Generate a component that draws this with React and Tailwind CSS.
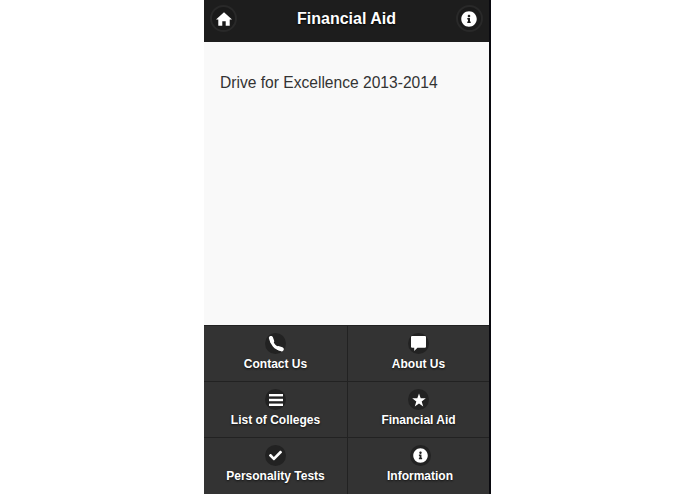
import { FaInfoCircle, FaCheck } from 'react-icons/fa';

function HomeIcon() {
  return (
    <svg viewBox="0 0 14 14" className="w-[16px] h-[16px]" fill="currentColor">
      <path d="M7 1 L14 7.5 L12 7.5 L12 13 L8.5 13 L8.5 9 L5.5 9 L5.5 13 L2 13 L2 7.5 L0 7.5 Z" />
    </svg>
  );
}

function PhoneIcon() {
  return (
    <svg viewBox="0 0 14 14" className="w-[16px] h-[16px]" fill="none" stroke="currentColor" strokeLinecap="round">
      <path d="M3 2.5 C2.8 6.5 6.5 11 11 11.5" strokeWidth="2.6" />
      <path d="M2.6 1.8 L3.6 4.6" strokeWidth="3.6" />
      <path d="M9.2 10.6 L12 11.6" strokeWidth="3.6" />
    </svg>
  );
}

function BubbleIcon() {
  return (
    <svg viewBox="0 0 14 14" className="w-[15px] h-[15px]" fill="currentColor">
      <path d="M1 0 H13 A1 1 0 0 1 14 1 V10 A1 1 0 0 1 13 11 H6 L3 14 V11 H1 A1 1 0 0 1 0 10 V1 A1 1 0 0 1 1 0 Z" />
    </svg>
  );
}

function BarsIcon() {
  return (
    <svg viewBox="0 0 14 12" className="w-[14px] h-[12px]" fill="currentColor">
      <rect x="0" y="0" width="14" height="2.4" />
      <rect x="0" y="4.8" width="14" height="2.4" />
      <rect x="0" y="9.6" width="14" height="2.4" />
    </svg>
  );
}

function StarIcon() {
  return (
    <svg viewBox="0 0 14 14" className="w-[14px] h-[14px]" fill="currentColor">
      <path d="M7 0.5 L8.7 5.2 L13.8 5.3 L9.7 8.4 L11.2 13.5 L7 10.5 L2.8 13.5 L4.3 8.4 L0.2 5.3 L5.3 5.2 Z" />
    </svg>
  );
}

const items = [
  { label: 'Contact Us', icon: <PhoneIcon /> },
  { label: 'About Us', icon: <BubbleIcon /> },
  { label: 'List of Colleges', icon: <BarsIcon /> },
  { label: 'Financial Aid', icon: <StarIcon /> },
  { label: 'Personality Tests', icon: <FaCheck className="text-[13px]" /> },
  { label: 'Information', icon: <FaInfoCircle className="text-[15px]" />, nudge: true },
];

function RoundIcon({ children }) {
  return (
    <div className="w-[21px] h-[21px] rounded-full bg-[#222] flex items-center justify-center text-white">
      {children}
    </div>
  );
}

function HeaderButton({ children }) {
  return (
    <div className="w-[27px] h-[27px] rounded-full bg-[#1a1a1a] border-2 border-[#292929] flex items-center justify-center text-white">
      {children}
    </div>
  );
}

export default function App() {
  return (
    <div className="h-[494px] bg-white flex justify-center font-['Liberation_Sans',Arial,sans-serif]">
      <div className="w-[287px] h-full flex flex-col bg-[#f9f9f9] border-r-2 border-[#0a0a0f]">
        <header className="h-[42px] bg-[#1d1d1d] flex items-start justify-between pl-[6px] pr-[6px] pt-[5px] shrink-0">
          <HeaderButton><HomeIcon /></HeaderButton>
          <h1 className="text-white font-bold text-[16px] leading-[27px] [text-shadow:0_1px_2px_#000]">Financial Aid</h1>
          <HeaderButton><FaInfoCircle className="text-[16px]" /></HeaderButton>
        </header>
        <main className="flex-1 pl-4 pt-[31px]">
          <p className="text-[15.6px] leading-[20px] text-[#333]">Drive for Excellence 2013-2014</p>
        </main>
        <nav className="grid grid-cols-[144px_1fr] grid-rows-[56px_56px_56px] shrink-0 bg-[#333] border-t border-[#222]">
          {items.map((item, i) => (
            <div
              key={item.label}
              className={`flex flex-col items-center pt-[7px] gap-[2px] border-[#222] ${i % 2 === 0 ? 'border-r' : ''} ${i < 4 ? 'border-b' : ''} ${item.nudge ? 'pl-[3px]' : ''}`}
            >
              <RoundIcon>{item.icon}</RoundIcon>
              <span className="text-white font-bold text-[12px] leading-[16px] [text-shadow:0_1px_2px_#111]">{item.label}</span>
            </div>
          ))}
        </nav>
      </div>
    </div>
  );
}
